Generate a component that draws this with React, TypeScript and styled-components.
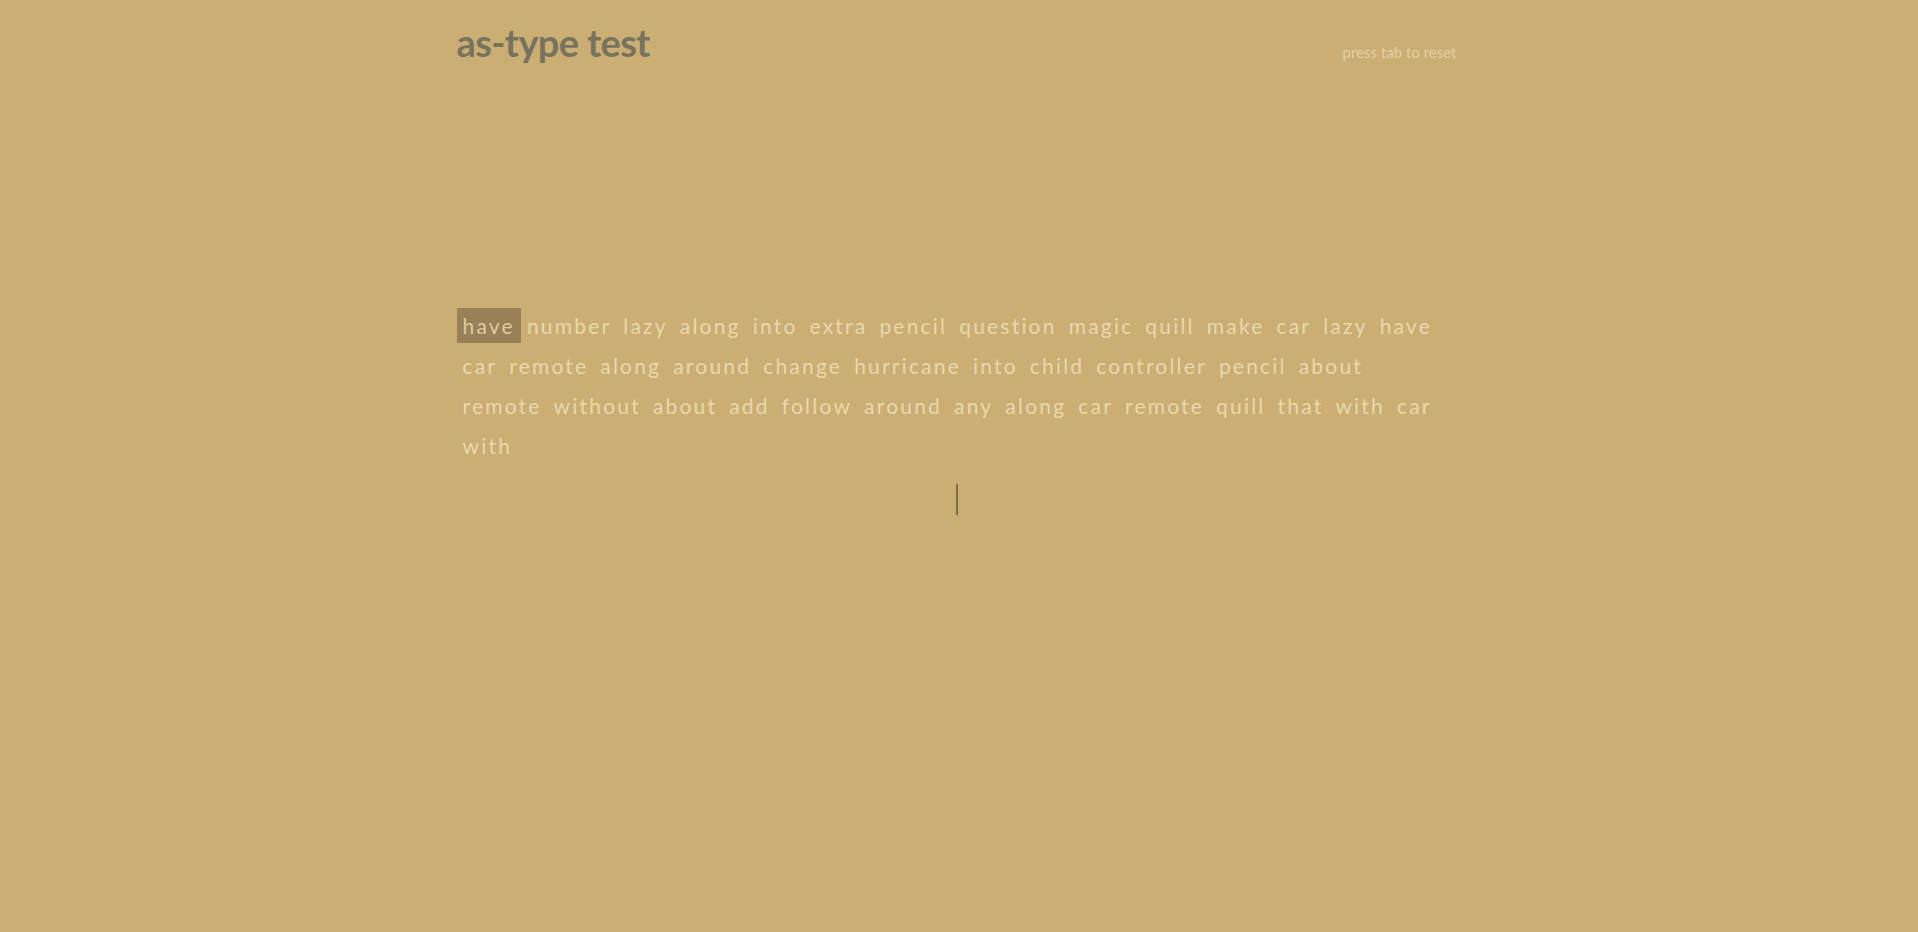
import styled, { createGlobalStyle } from "styled-components";

const GlobalStyles = createGlobalStyle`
  html {
    box-sizing: border-box;
    background: #cbae73;
    font-family: "Lato", "Open Sans", sans-serif;
  }

  body {
    margin: 0;
    padding-right: 5px;
    min-height: 932px;
  }

  *,
  *:before,
  *:after {
    box-sizing: inherit;
  }
`;

const lines: string[][] = [
  ["have", "number", "lazy", "along", "into", "extra", "pencil", "question", "magic", "quill", "make", "car", "lazy", "have"],
  ["car", "remote", "along", "around", "change", "hurricane", "into", "child", "controller", "pencil", "about"],
  ["remote", "without", "about", "add", "follow", "around", "any", "along", "car", "remote", "quill", "that", "with", "car"],
  ["with"],
];

function App() {
  return (
    <Wrapper>
      <GlobalStyles />
      <Header>
        <Title>as-type test</Title>
        <Hint>press tab to reset</Hint>
      </Header>
      <Words>
        {lines.map((line, i) => (
          <Line key={i}>
            {line.map((word, j) => (
              <Word key={j} active={i === 0 && j === 0}>
                {word}
              </Word>
            ))}
          </Line>
        ))}
      </Words>
      <Caret />
    </Wrapper>
  );
}

export default App;

const Wrapper = styled.div`
  width: 1000px;
  margin: 0 auto;
  display: flex;
  flex-direction: column;
`;

const Header = styled.header`
  display: flex;
  justify-content: space-between;
  align-items: flex-start;
  padding-top: 18px;
`;

const Title = styled.h1`
  margin: 0;
  font-size: 38px;
  line-height: 48px;
  font-weight: 700;
  letter-spacing: -0.6px;
  color: #78735f;
`;

const Hint = styled.span`
  margin-top: 25px;
  font-size: 15px;
  line-height: 18px;
  color: #e4d0a0;
`;

const Words = styled.div`
  margin-top: 242px;
  display: flex;
  flex-direction: column;
  gap: 5px;
`;

const Line = styled.div`
  display: flex;
`;

const Word = styled.span<{ active?: boolean }>`
  padding: 0 6px;
  height: 35px;
  line-height: 35px;
  font-size: 21px;
  letter-spacing: 2.2px;
  color: ${(p) => (p.active ? "#ddcba3" : "#ead8ab")};
  background: ${(p) => (p.active ? "#988157" : "transparent")};
`;

const Caret = styled.div`
  align-self: center;
  width: 2px;
  height: 31px;
  margin-top: 21px;
  background: #7c6c4e;
`;
